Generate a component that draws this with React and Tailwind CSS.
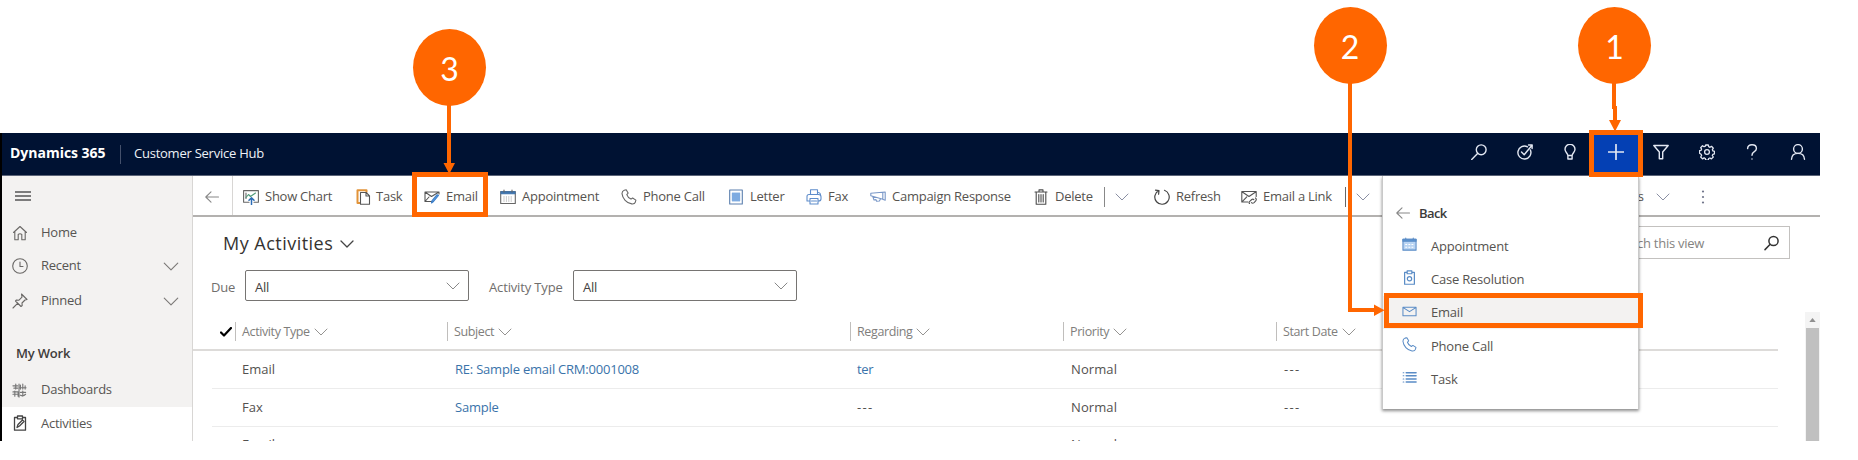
import React from "react";

function Icon({ className = "size-4", sw = 1.1, children, box = "0 0 16 16" }) {
  return (
    <svg viewBox={box} className={`shrink-0 ${className}`} fill="none" stroke="currentColor" strokeWidth={sw} strokeLinecap="round" strokeLinejoin="round">
      {children}
    </svg>
  );
}

function Chevron({ className = "", sw = 1 }) {
  return (
    <Icon box="0 0 14 8" sw={sw} className={`h-2 w-3.5 ${className}`}>
      <path d="M1 1l6 6 6-6" />
    </Icon>
  );
}

function BackArrow({ className = "" }) {
  return (
    <Icon box="0 0 14 12" className={`h-3 w-3.5 ${className}`}>
      <path d="M13.5 6H1M6 .8L.8 6 6 11.2" />
    </Icon>
  );
}

const phonePath =
  "M3.2 1.2l2-.5 1.9 3.4-1.3 1.5c.6 1.8 2.1 3.6 4.2 4.5l1.6-1.1 3.3 2.1-.6 2.1c-.5 1.4-2 1.9-3.6 1.7C5.600 14.200 1.500 9.500 1 4.600c0-1.500.700-2.900 2.200-3.400z";

const icons = {
  chart: (
    <Icon className="size-4 text-[#666]">
      <path d="M6 13.200H.600V1.600h14.800v11.600H11M3 9.500V4" />
      <path d="M3 8.500l2.500-3 2 2L12.500 4" stroke="#4f9b78" />
      <path d="M8.500 15.500V8.800M6 11.300l2.500-2.500 2.500 2.500" stroke="#2c6cb5" strokeWidth="1.500" />
    </Icon>
  ),
  task: (
    <Icon className="-mr-0.5 size-4 text-[#555]">
      <path d="M4 14H1.500V1.300h9V3" stroke="#e2943a" strokeWidth="2" />
      <path d="M4.500 3.500h5.700l3.300 3.300v8.400h-9zM10 3.500V7h3.500" fill="#fff" />
    </Icon>
  ),
  email: (
    <Icon className="size-4 text-[#555]">
      <path d="M8 12.500H1V3h14v2M1 3l6.500 4.500L15 3M1 12.500l4-4.500" />
      <path d="M14.500 6.500l-5 6-2 1.500.6-2.500 5-5.800z" fill="#5b9be0" stroke="#3d7fc8" />
    </Icon>
  ),
  appointment: (
    <Icon className="size-4 text-[#666]">
      <path d="M.7 2.500h14.600v12H.7z" />
      <path d="M1 2.800h14v2H1z" fill="#3f74ad" stroke="#3f74ad" />
      <path d="M4 1v2M12 1v2" />
      <path d="M3.500 8h9M3.500 10h9M3.500 12h9" stroke="#999" strokeDasharray="1 1.400" strokeLinecap="butt" />
    </Icon>
  ),
  phone: (
    <Icon className="size-4 text-[#666]">
      <path d={phonePath} />
    </Icon>
  ),
  letter: (
    <Icon className="size-4 text-[#5b7fae]">
      <path d="M1.700 1h12.600v14H1.700z" />
      <path d="M4 3.500h8v9H4z" fill="#8fb8e8" stroke="none" />
      <path d="M4 5h8M4 7h8M4 9h8M4 11h8" stroke="#5e93d2" strokeWidth=".7" />
    </Icon>
  ),
  fax: (
    <Icon className="size-4 text-[#5f8dcb]">
      <path d="M4.500 5V.800h7V5M4 12H1V7.500Q1 5.500 3 5.500h9.500q2.500 0 2.500 2.200V10q0 2-2.500 2H12M4 9.500h8V15H4zM5.500 12h5" />
      <path d="M12.500 3.500q2 .5 2 2" />
    </Icon>
  ),
  campaign: (
    <Icon className="size-4 text-[#7a98c8]">
      <path d="M.8 4.200L15.200 3v8.200L12 10 .8 6.800zM2.800 7.600l1.200 3.400 2-.4.600 1.600 2.800-.2 1.200-2.200M12.800 3.400v6.800" />
    </Icon>
  ),
  trash: (
    <Icon className="size-4 text-[#4c4c4c]">
      <path d="M2 3h12M6 2.800V.900h4v1.900M3.200 3v12.200h9.600V3" />
      <path d="M5.800 5.500v7.500M8 5.500v7.500M10.200 5.500v7.500" />
    </Icon>
  ),
  refresh: (
    <Icon className="size-4 text-[#444]" sw={1.2}>
      <path d="M10.500 1.300a7.200 7.200 0 1 1-5.700.3M1.500 1.200l3.500.4-.4 3.600" />
    </Icon>
  ),
  link: (
    <Icon className="size-4 text-[#555]">
      <path d="M7 13H.800V2.500h14.400v5M1 2.800l7 4.700 7-4.700M1 12.800l4.800-5" />
      <path d="M9 12.200l1.800-1.700q1.200-.8 2 .2M14.500 9q1.500 1.500.2 2.900l-1.600 1.700q-1.500 1.200-2.700 0M8.500 14.500q-1-1 .5-2.300" />
    </Icon>
  ),
};

function Tool({ icon, label, className }) {
  return (
    <div className={`flex shrink-0 items-center gap-1.5 whitespace-nowrap text-[13px] tracking-[-0.25px] text-[#565350] ${className}`}>
      {icons[icon]}
      <span>{label}</span>
    </div>
  );
}

function NavItem({ icon, label, chevron, className }) {
  return (
    <div className={`flex items-center pr-[13px] pl-[10px] text-[13px] tracking-[-0.25px] text-[#575553] ${className}`}>
      <span className="flex w-[29px] text-[#6a6866]">{icon}</span>
      <span className="flex-1">{label}</span>
      {chevron && <Chevron className="h-[9px] w-4 text-[#7a7876]" />}
    </div>
  );
}

function Select({ className = "" }) {
  return (
    <div className={`flex h-[31px] w-[224px] items-center justify-between rounded-[2px] border border-[#767472] pr-2 pl-[9px] text-[13px] tracking-[-0.2px] text-[#44413f] ${className}`}>
      <span className="mt-1">All</span>
      <Chevron className="text-[#888]" />
    </div>
  );
}

function ColHead({ label, className }) {
  return (
    <div className={`flex h-[19px] shrink-0 items-center gap-1 border-l border-[#c0bebc] pl-[6px] text-[12.5px] tracking-[-0.38px] whitespace-nowrap text-[#807e7c] ${className}`}>
      <span className="mt-0.5">{label}</span>
      <Chevron className="text-[#959391]" />
    </div>
  );
}

function Row({ type, subject, regarding, regLink, priority, date }) {
  return (
    <div className="flex h-[38px] shrink-0 items-center border-b border-[#ececec] pt-px pl-[30px] text-[13px] text-[#53514f]">
      <div className="w-[213px]">{type}</div>
      <div className="w-[402px] tracking-[-0.22px] text-[#3a73aa]">{subject}</div>
      <div className={regLink ? "w-[214px] tracking-[-0.3px] text-[#3a73aa]" : "w-[214px] tracking-[1.3px]"}>{regarding}</div>
      <div className="w-[213px] tracking-[0.1px]">{priority}</div>
      <div className="tracking-[1.3px]">{date}</div>
    </div>
  );
}

function MenuItem({ icon, label, active }) {
  return (
    <div className={`flex h-[33.250px] items-center pl-[19px] text-[13px] tracking-[-0.22px] text-[#565350] ${active ? "bg-[#f3f2f1]" : ""}`}>
      <span className="flex w-[29px] text-[#5a8cc6]">{icon}</span>
      <span className="mt-0.5">{label}</span>
    </div>
  );
}

function HeaderIcon({ className = "", children, sw = 1.4 }) {
  return (
    <div className={`flex h-full w-[45.500px] items-center justify-center pl-px ${className}`}>
      <Icon sw={sw} className="size-4">
        {children}
      </Icon>
    </div>
  );
}

function Badge({ n, className }) {
  return (
    <div className={`absolute flex h-[77px] w-[73px] items-center justify-center rounded-[50%] bg-[#ff6600] pt-0.5 font-['Lato',sans-serif] text-[32px] leading-none text-white ${className}`}>
      {n}
    </div>
  );
}

const gearPoints =
  "M6.700 1h2.600l.4 1.700 1.300.6 1.500-1 1.800 1.900-.9 1.500.5 1.200 1.600.4v2.600l-1.600.4-.6 1.200 1 1.500-1.900 1.900-1.500-.9-1.200.5-.4 1.600H6.700l-.4-1.600-1.200-.6-1.600 1-1.800-1.900.9-1.500-.5-1.200L.5 9.300V6.700l1.600-.4.5-1.200-.9-1.500 1.800-1.900 1.600 1 1.200-.5z";

export default function App() {
  return (
    <div className="relative h-[460px] w-[1858px] overflow-hidden bg-white pt-[133px] font-['Open_Sans','Noto_Sans',sans-serif]">
      <div className="flex h-[308px] w-[1820px] flex-col overflow-hidden border-l-2 border-black">
        <header className="flex h-[43px] shrink-0 items-center border-b border-[#5b6478] bg-[#001233] text-white">
          <div className="w-[118px] pb-[3px] pl-2 text-[14px] font-bold tracking-[-0.02px] whitespace-nowrap">Dynamics 365</div>
          <div className="h-[19px] w-px bg-[#44506b]" />
          <div className="ml-[13px] flex-1 text-[13px] tracking-[-0.24px] text-[#eef1f6]">Customer Service Hub</div>
          <div className="flex h-full pb-1 text-[#e2e7f2]">
            <HeaderIcon>
              <circle cx="10.200" cy="5.800" r="4.900" />
              <path d="M6.800 9.200L.700 15.400" />
            </HeaderIcon>
            <HeaderIcon>
              <path d="M10.500 2.800A6.500 6.500 0 1 0 13.400 6M4.500 8l2.700 2.700L14.800 1.500M11.500 1l3.700-.1-.1 3.600" />
            </HeaderIcon>
            <HeaderIcon>
              <path d="M5.800 11.500C5.800 9 3 8.300 3 5.300a5 5 0 0 1 10 0c0 3-2.800 3.700-2.800 6.200zM5.900 11.800v3.200h4.200v-3.200" />
            </HeaderIcon>
            <div className="-mb-1 flex w-[45.500px] items-center justify-center bg-[#0440b4] pb-1 pl-0.5">
              <Icon sw={1.7} className="size-4">
                <path d="M8 .5v15M.5 8h15" />
              </Icon>
            </div>
            <HeaderIcon>
              <path d="M.8 1.500h14.400L9.700 8v6.800H6.300V8z" />
            </HeaderIcon>
            <HeaderIcon sw={1.300}>
              <path d={gearPoints} />
              <circle cx="8" cy="8" r="2.400" />
            </HeaderIcon>
            <HeaderIcon>
              <path d="M3.600 4.600Q3.800.7 8 .7q4.400 0 4.400 3.700 0 1.700-1.800 3Q8 9.100 8 11.300M8 14.900v.2" />
            </HeaderIcon>
            <HeaderIcon>
              <circle cx="8" cy="5" r="4.400" />
              <path d="M1.500 15.200C1.700 11.500 4.500 9.400 8 9.400s6.300 2.100 6.500 5.800" />
            </HeaderIcon>
          </div>
        </header>

        <div className="flex min-h-0 flex-1">
          <aside className="flex w-[191px] shrink-0 flex-col border-r border-[#d8d6d4] bg-[#f3f2f1]">
            <div className="flex h-[40px] shrink-0 items-center pl-[13px] text-[#555]">
              <Icon box="0 0 16 10" sw={1.6} className="h-2.5 w-4">
                <path d="M0 1h16M0 5h16M0 9h16" />
              </Icon>
            </div>
            <NavItem
              className="h-[33px] shrink-0"
              label="Home"
              icon={
                <Icon>
                  <path d="M1.500 7.500L8 1.500l6.500 6M2.800 6.500v8.300h3.400V9.500q1.800-1.500 3.600 0v5.300h3.400V6.500" />
                </Icon>
              }
            />
            <NavItem
              className="h-[34px] shrink-0"
              label="Recent"
              chevron
              icon={
                <Icon>
                  <circle cx="8" cy="8" r="7.300" />
                  <path d="M8 4v4.500h3" />
                </Icon>
              }
            />
            <NavItem
              className="h-[36px] shrink-0"
              label="Pinned"
              chevron
              icon={
                <Icon>
                  <path d="M9.500 1l5.500 5.500-2 .5-3 3 .2 2.500-1.200 1L3.500 8l1-1 2.500.2 3-3zM5.800 10.200L1 15" />
                </Icon>
              }
            />
            <div className="flex h-[54px] shrink-0 items-center pt-[15px] pl-[14px] text-[13px] font-semibold tracking-[-0.2px] text-[#3f3d3b]">My Work</div>
            <NavItem
              className="h-[34px] shrink-0"
              label="Dashboards"
              icon={
                <Icon sw={1.200} className="size-[15px] text-[#777]">
                  <path d="M1 3h5M2 5.500h4M4 1v5.500M9 2.200v4.300M11.500 1v5.500M14 3v3.500M8.500 5h6.500M1 9.500h5.500v4.500M3 8.500v5.500M1 12h4.500M9 10h5.500M9 13q3 1.500 5.500-1M11.500 8.500v5.500M7.500 1v14" />
                </Icon>
              }
            />
            <div className="mt-auto bg-white">
              <NavItem
                className="h-[34px] text-[#464442]"
                label="Activities"
                icon={
                  <Icon sw={1.300} className="mb-0.5 size-[16px] text-[#444]">
                    <path d="M5 2.500H2.500v12.700h11V2.500H11M5.500 1h5v2.800h-5zM5 12.500l1-3 4.500-4.500 1.500 1.500-4.500 4.500z" />
                  </Icon>
                }
              />
              <div className="h-px bg-[#e4e2e0]" />
            </div>
          </aside>

          <main className="flex min-w-0 flex-1 flex-col">
            <div className="flex h-[41px] shrink-0 items-center border-b-2 border-[#b3b1af]">
              <div className="flex h-full w-[40px] shrink-0 items-center border-r border-[#d8d6d4] pt-0.5 pl-3 text-[#888]">
                <BackArrow />
              </div>
              <div className="flex flex-1 items-center pt-0.5 pl-[10px]">
                <Tool icon="chart" label="Show Chart" className="w-[113px]" />
                <Tool icon="task" label="Task" className="w-[68px]" />
                <Tool icon="email" label="Email" className="w-[76px]" />
                <Tool icon="appointment" label="Appointment" className="w-[121px]" />
                <Tool icon="phone" label="Phone Call" className="w-[107px]" />
                <Tool icon="letter" label="Letter" className="w-[78px]" />
                <Tool icon="fax" label="Fax" className="w-[64px]" />
                <Tool icon="campaign" label="Campaign Response" className="w-[163px]" />
                <Tool icon="trash" label="Delete" className="w-[71px]" />
                <div className="h-5 w-px bg-[#888]" />
                <Chevron className="mr-[25px] ml-[10px] text-[#8a8fa3]" />
                <Tool icon="refresh" label="Refresh" className="w-[87px]" />
                <Tool icon="link" label="Email a Link" className="w-[104px]" />
                <div className="h-5 w-px bg-[#666]" />
                <Chevron className="ml-[10px] text-[#8a8fa3]" />
                <div className="ml-[215px] w-[59px] text-right text-[13px] text-[#565350]">Flows</div>
                <Chevron className="ml-[12px] text-[#8a8fa3]" />
                <svg viewBox="0 0 4 16" className="ml-[31px] h-4 w-1 fill-[#70758a]">
                  <circle cx="2" cy="2.500" r="1.100" />
                  <circle cx="2" cy="8" r="1.100" />
                  <circle cx="2" cy="13.500" r="1.100" />
                </svg>
              </div>
            </div>

            <div className="flex h-[53px] shrink-0 items-center justify-between pr-[30px] pl-[30px]">
              <div className="flex items-center gap-[7px] text-[18px] font-medium tracking-[0.48px] text-[#353331]">
                <span>My Activities</span>
                <Chevron sw={1.3} className="text-[#444]" />
              </div>
              <div className="mb-0.5 flex h-[33px] w-[212px] items-center justify-between border border-[#c3c1bf] pr-[9px] pl-[32px] text-[13px] tracking-[-0.25px] text-[#858381]">
                <span className="pt-[3px]">Search this view</span>
                <Icon sw={1.500} className="size-4 text-[#333]">
                  <circle cx="9.500" cy="6" r="4.600" />
                  <path d="M6.200 9.300L1 14.600" />
                </Icon>
              </div>
            </div>

            <div className="flex h-[31px] shrink-0 items-center pl-[18px] text-[13px] tracking-[-0.15px] text-[#706e6c]">
              <span className="mt-1 w-[34px]">Due</span>
              <Select />
              <span className="mt-1 ml-5 w-[84px]">Activity Type</span>
              <Select />
            </div>

            <div className="flex min-h-0 flex-1">
              <div className="flex w-[1585px] flex-col overflow-hidden">
                <div className="mt-[12px] flex h-[38px] shrink-0 items-center border-b-2 border-[#dddbd9] pt-[3px] pb-[2px] pl-[27px] text-black">
                  <Icon sw={2.200} box="0 0 12 10" className="mr-[3px] h-[10px] w-3">
                    <path d="M1 5.500l3 3L11 1" />
                  </Icon>
                  <ColHead label="Activity Type" className="w-[212px]" />
                  <ColHead label="Subject" className="w-[403px]" />
                  <ColHead label="Regarding" className="w-[213px]" />
                  <ColHead label="Priority" className="w-[213px]" />
                  <ColHead label="Start Date" className="w-[502px]" />
                  <div className="h-[19px] w-px shrink-0 bg-[#b8b6b4]" />
                </div>
                <div className="ml-[19px] flex min-h-0 flex-1 flex-col overflow-hidden">
                  <Row type="Email" subject="RE: Sample email CRM:0001008" regarding="ter" regLink priority="Normal" date="---" />
                  <Row type="Fax" subject="Sample" regarding="---" priority="Normal" date="---" />
                  <div className="-mt-px">
                    <Row type="Email" subject="" regarding="" priority="Normal" date="" />
                  </div>
                </div>
              </div>
              <div className="mt-[11px] ml-auto flex w-[15px] flex-col items-center bg-[#f4f4f4]">
                <div className="flex h-4 items-center text-[#999]">
                  <svg viewBox="0 0 8 5" className="h-[4px] w-[7px] fill-[#8f8f8f]">
                    <path d="M0 5l4-5 4 5z" />
                  </svg>
                </div>
                <div className="w-[13px] flex-1 bg-[#c0c0c0]" />
              </div>
            </div>
          </main>
        </div>
      </div>

      <div className="absolute top-[176px] left-[1382px] flex h-[233px] w-[257px] flex-col border-x border-[#c9c9c9] bg-white pt-[20px] shadow-[0_2px_3px_rgba(0,0,0,0.45)]">
        <div className="flex h-[33px] items-center gap-[9px] pl-[13px] text-[13px] font-semibold tracking-[-0.6px] text-[#3b3b3b]">
          <BackArrow className="text-[#888]" />
          <span className="mt-0.5">Back</span>
        </div>
        <MenuItem
          label="Appointment"
          icon={
            <Icon className="mb-0.5 size-[15px]">
              <path d="M1 2.500h14v11.500H1z" fill="#b9d4f2" />
              <path d="M1 2.500h14v2H1z" fill="#5b93cf" />
              <path d="M4 1v2M12 1v2" />
              <path d="M3.500 8h9M3.500 11h9" stroke="#fff" strokeDasharray="2 1.300" strokeLinecap="butt" />
            </Icon>
          }
        />
        <MenuItem
          label="Case Resolution"
          icon={
            <Icon className="mb-0.5 size-[15px]" sw={1.300}>
              <path d="M5 2.500H2.800v12.700h10.400V2.500H11M5.500 1h5v3h-5z" />
              <circle cx="8" cy="9.300" r="2.300" />
            </Icon>
          }
        />
        <MenuItem
          label="Email"
          active
          icon={
            <Icon className="mb-0.5 size-[15px]">
              <path d="M1 3.500h14v9H1zM1.300 3.800L8 8.200l6.700-4.400" />
            </Icon>
          }
        />
        <MenuItem
          label="Phone Call"
          icon={
            <Icon className="mb-0.5 size-[15px]">
              <path d={phonePath} />
            </Icon>
          }
        />
        <MenuItem
          label="Task"
          icon={
            <Icon className="mb-0.5 size-[15px]">
              <path d="M4.500 3H15M4.500 6.200H15M4.500 9.500H15M4.500 12.700H15" strokeWidth="1.600" />
              <path d="M1.200 3h.8M1.200 6.200h.8M1.200 9.500h.8M1.200 12.700h.8" />
            </Icon>
          }
        />
      </div>

      <div className="absolute top-[172px] left-[412px] h-[45px] w-[76px] border-[5px] border-[#ff6600]" />
      <div className="absolute top-[130px] left-[1589px] h-[47px] w-[54px] border-[5px] border-[#ff6600]" />
      <div className="absolute top-[293px] left-[1384px] h-[35px] w-[259px] border-[5px] border-[#ff6600]" />
      <svg viewBox="0 0 1858 460" className="absolute inset-0 h-[460px] w-[1858px]">
        <g fill="none" stroke="#ff6600" strokeWidth="4">
          <path d="M449 100V166" />
          <path d="M1614 80V109M1615 106V124" />
          <path d="M1350 80V310H1376" />
        </g>
        <path fill="#ff6600" d="M443.500 163h11.500l-5.700 11zM1609 120h12l-6 11.500zM1374 304.500v11.500l10.500-5.800z" />
      </svg>
      <Badge n="3" className="top-[29px] left-[413px]" />
      <Badge n="2" className="top-[7px] left-[1313.500px]" />
      <Badge n="1" className="top-[7px] left-[1578px]" />
    </div>
  );
}
